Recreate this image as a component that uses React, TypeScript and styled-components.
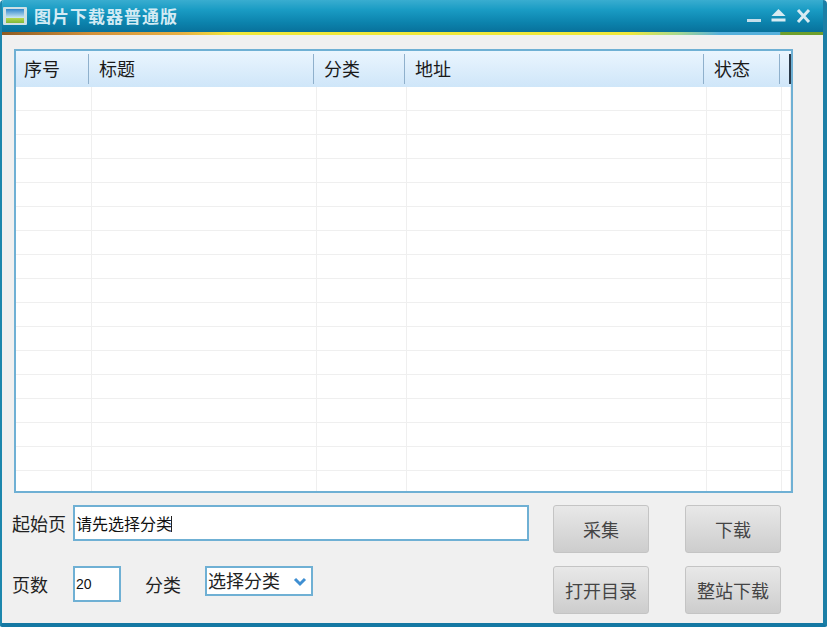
import React from 'react';
import styled, { createGlobalStyle } from 'styled-components';

const CJK = `"Noto Sans CJK SC", "Liberation Sans", sans-serif`;
const borderBlue = '#6fb0d4';
const HEADER_COLUMNS = '74px 225px 91px 299px 76px 10px 1fr';
const BODY_COLUMNS = '76px 225px 90px 300px 75px 1fr';

const GlobalStyle = createGlobalStyle`
  html, body {
    margin: 0;
    padding: 0;
    background: #ffffff;
    font-family: ${CJK};
  }
`;

const Window = styled.div`
  width: 827px;
  height: 627px;
  display: flex;
  flex-direction: column;
  box-sizing: border-box;
  background: #f0f0f0;
  border-left: 2px solid #1c87ad;
  border-right: 4px solid #1c7fa6;
  border-bottom: 4px solid #1478a3;
  border-radius: 4px 4px 2px 2px;
  overflow: hidden;
`;

const TitleBar = styled.div`
  height: 32px;
  flex: none;
  margin: 0 -4px 0 -2px;
  padding: 0 16px 0 3px;
  display: flex;
  align-items: center;
  background: linear-gradient(#39add0 0, #1a9cc4 30%, #0c83ad 70%, #08719b 100%);
  color: #d3ebf4;
`;

const Title = styled.span`
  margin-left: 7px;
  font-size: 17px;
  font-weight: 700;
  letter-spacing: 1px;
  line-height: 32px;
  flex: 1;
`;

const Controls = styled.div`
  display: flex;
  align-items: center;
  gap: 10px;
`;

const Stripe = styled.div`
  height: 3px;
  flex: none;
  margin: 0 -4px 0 -2px;
  background: linear-gradient(
    90deg,
    #8c5a22 0,
    #d2903a 11%,
    #e8b044 22%,
    #f0e83c 28%,
    #f0e83c 76%,
    #a8d890 82%,
    #55b0dc 87%,
    #55b0dc 94.3%,
    #6f9f2c 94.4%,
    #6f9f2c 100%
  );
`;

const Content = styled.div`
  flex: 1;
  display: flex;
  flex-direction: column;
  padding: 14px 0 0 12px;
  min-height: 0;
`;

const TablePanel = styled.div`
  width: 779px;
  height: 444px;
  flex: none;
  box-sizing: border-box;
  border: 2px solid ${borderBlue};
  background: #ffffff;
  overflow: hidden;
`;

const HeaderRow = styled.div`
  height: 36px;
  display: grid;
  grid-template-columns: ${HEADER_COLUMNS};
  background: linear-gradient(#eaf5fe, #cfe6f9);
`;

const HeaderCell = styled.div<{ $dark?: boolean }>`
  box-sizing: border-box;
  padding-left: 9px;
  font-size: 18px;
  line-height: 34px;
  color: #1a1a1a;
  position: relative;
  &:first-child {
    padding-left: 8px;
  }
  &::after {
    content: '';
    position: absolute;
    right: ${({ $dark }) => ($dark ? '0' : '1px')};
    top: 3px;
    bottom: 3px;
    width: ${({ $dark }) => ($dark ? '2px' : '1px')};
    background: ${({ $dark }) => ($dark ? '#2a3a4a' : '#8fb0cc')};
  }
`;

const EmptyCell = styled.div``;

const BodyRow = styled.div`
  height: 24px;
  box-sizing: border-box;
  display: grid;
  grid-template-columns: ${BODY_COLUMNS};
  border-bottom: 1px solid #efefef;
`;

const BodyCell = styled.div`
  border-right: 1px solid #efefef;
`;

const Form = styled.div`
  flex: 1;
  display: flex;
  margin-left: -2px;
  padding-top: 12px;
`;

const Fields = styled.div`
  width: 541px;
  display: flex;
  flex-direction: column;
  gap: 25px;
`;

const FieldRow = styled.div`
  display: flex;
  align-items: center;
  height: 36px;
`;

const Label = styled.label<{ $width: number; $offset?: number }>`
  width: ${({ $width }) => $width}px;
  margin-left: ${({ $offset }) => $offset ?? 0}px;
  flex: none;
  font-size: 18px;
  color: #222222;
`;

const TextInput = styled.input<{ $width: number; $small?: boolean }>`
  width: ${({ $width }) => $width}px;
  height: 36px;
  box-sizing: border-box;
  padding: 0 1px;
  border: 2px solid ${borderBlue};
  background: #ffffff;
  color: #111111;
  outline: none;
  font-family: ${({ $small }) => ($small ? `"Liberation Sans", sans-serif` : CJK)};
  font-size: ${({ $small }) => ($small ? '14px' : '16px')};
`;

const SelectBox = styled.div`
  width: 108px;
  height: 30px;
  margin: -6px 0 0 24px;
  box-sizing: border-box;
  padding: 0 4px 3px 1px;
  display: flex;
  align-items: center;
  justify-content: space-between;
  border: 2px solid ${borderBlue};
  background: #ffffff;
  font-size: 18px;
  color: #222222;
`;

const ChevronIcon = styled.svg`
  margin-top: 5px;
`;

const ButtonGrid = styled.div`
  display: grid;
  grid-template-columns: 96px 96px;
  grid-auto-rows: 48px;
  column-gap: 36px;
  row-gap: 13px;
`;

const Button = styled.button`
  box-sizing: border-box;
  padding: 0;
  border: 1px solid #c4c4c4;
  border-radius: 3px;
  background: linear-gradient(#e8e8e8, #cdcdcd);
  font-family: ${CJK};
  font-size: 18px;
  color: #444444;
`;

const Caret = styled.span`
  display: inline-block;
  width: 1px;
  height: 16px;
  background: #222222;
  position: absolute;
  left: 98px;
  top: 11px;
`;

const InputWrap = styled.div`
  position: relative;
  display: flex;
`;

const AppIcon = () => (
  <svg width="24" height="18" viewBox="0 0 24 18">
    <defs>
      <linearGradient id="sky" x1="0" y1="0" x2="0" y2="1">
        <stop offset="0" stopColor="#2f86cc" />
        <stop offset="1" stopColor="#cfeaf2" />
      </linearGradient>
      <linearGradient id="grass" x1="0" y1="0" x2="0" y2="1">
        <stop offset="0" stopColor="#b6d84e" />
        <stop offset="1" stopColor="#7fb83c" />
      </linearGradient>
    </defs>
    <rect x="0" y="0" width="24" height="18" rx="1" fill="#cfe0e4" />
    <rect x="3" y="2" width="18" height="9" fill="url(#sky)" />
    <rect x="3" y="11" width="18" height="5" fill="url(#grass)" />
  </svg>
);

const MinimizeIcon = () => (
  <svg width="14" height="16" viewBox="0 0 14 16">
    <rect x="0" y="11" width="14" height="3" fill="#c4deea" />
  </svg>
);

const RestoreIcon = () => (
  <svg width="15" height="16" viewBox="0 0 15 16">
    <path d="M7.5 1 L14.5 8 L0.5 8 Z" fill="#d8ebf2" />
    <rect x="0.5" y="10.5" width="14" height="3" fill="#d8ebf2" />
  </svg>
);

const CloseIcon = () => (
  <svg width="15" height="16" viewBox="0 0 15 16">
    <path d="M2 2 L13 14 M13 2 L2 14" stroke="#d8ebf2" strokeWidth="3" />
  </svg>
);

const Chevron = () => (
  <ChevronIcon width="14" height="10" viewBox="0 0 14 10">
    <path d="M2 2 L7 7 L12 2" fill="none" stroke="#3f8fd2" strokeWidth="3" />
  </ChevronIcon>
);

const headers = ['序号', '标题', '分类', '地址', '状态'];
const rows = Array.from({ length: 17 }, (_, i) => i);
const cells = [0, 1, 2, 3, 4, 5];

export default function App() {
  return (
    <>
      <GlobalStyle />
      <Window>
        <TitleBar>
          <AppIcon />
          <Title>图片下载器普通版</Title>
          <Controls>
            <MinimizeIcon />
            <RestoreIcon />
            <CloseIcon />
          </Controls>
        </TitleBar>
        <Stripe />
        <Content>
          <TablePanel>
            <HeaderRow>
              {headers.map(h => (
                <HeaderCell key={h}>{h}</HeaderCell>
              ))}
              <HeaderCell $dark />
              <EmptyCell />
            </HeaderRow>
            {rows.map(r => (
              <BodyRow key={r}>
                {cells.map(c => (
                  <BodyCell key={c} />
                ))}
              </BodyRow>
            ))}
          </TablePanel>
          <Form>
            <Fields>
              <FieldRow>
                <Label $width={61}>起始页</Label>
                <InputWrap>
                  <TextInput $width={456} defaultValue="请先选择分类" />
                  <Caret />
                </InputWrap>
              </FieldRow>
              <FieldRow>
                <Label $width={61}>页数</Label>
                <TextInput $width={48} $small defaultValue="20" />
                <Label $width={36} $offset={24}>分类</Label>
                <SelectBox>
                  选择分类
                  <Chevron />
                </SelectBox>
              </FieldRow>
            </Fields>
            <ButtonGrid>
              <Button>采集</Button>
              <Button>下载</Button>
              <Button>打开目录</Button>
              <Button>整站下载</Button>
            </ButtonGrid>
          </Form>
        </Content>
      </Window>
    </>
  );
}
